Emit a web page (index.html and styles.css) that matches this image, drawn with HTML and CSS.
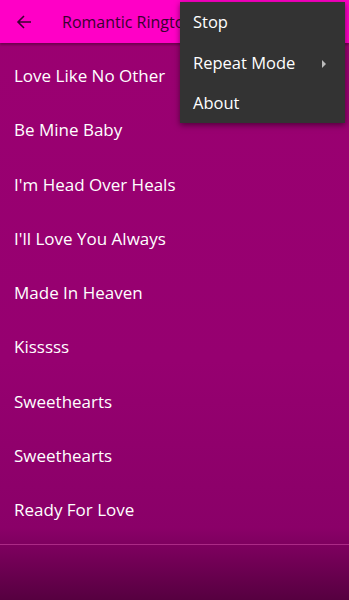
FILE: index.html
```html
<!DOCTYPE html>
<html lang="en">
<head>
  <meta charset="UTF-8">
  <meta name="viewport" content="width=device-width, initial-scale=1.0">
  <title>Romantic Ringtones</title>
  <link rel="stylesheet" href="styles.css">
</head>
<body>
  <div class="app">
    <div class="toolbar">
      <svg class="back" width="16" height="16" viewBox="0 0 16 16">
        <path d="M15 8H2M8 2L2 8l6 6" fill="none" stroke="#3a0030" stroke-width="1.6"/>
      </svg>
      <span class="title">Romantic Ringtones</span>
    </div>

    <div class="list">
      <div class="item">Love Like No Other</div>
      <div class="item">Be Mine Baby</div>
      <div class="item">I'm Head Over Heals</div>
      <div class="item">I'll Love You Always</div>
      <div class="item">Made In Heaven</div>
      <div class="item">Kisssss</div>
      <div class="item">Sweethearts</div>
      <div class="item">Sweethearts</div>
      <div class="item">Ready For Love</div>
    </div>
    <div class="footer"></div>

    <div class="menu">
      <div class="menu-item">Stop</div>
      <div class="menu-item">Repeat Mode <span class="arrow"></span></div>
      <div class="menu-item">About</div>
    </div>
  </div>
</body>
</html>
```

FILE: styles.css
```css
body {
  margin: 0;
  padding: 0;
  font-family: 'Open Sans', 'Noto Sans', sans-serif;
  background: #990070;
  overflow: hidden;
}

.app {
  position: relative;
  width: 349px;
  height: 600px;
  background: linear-gradient(to bottom, #9b0071 0%, #960070 60%, #8a0068 88%, #560040 100%);
}

.toolbar {
  height: 43px;
  background: #ff00c6;
  display: flex;
  align-items: center;
  box-shadow: 0 2px 2px rgba(60, 0, 40, 0.45);
  overflow: hidden;
  white-space: nowrap;
}

.back {
  margin-left: 16px;
  flex-shrink: 0;
}

.title {
  margin-left: 30px;
  width: 118px;
  overflow: hidden;
  font-size: 16px;
  color: #3a0030;
}

.list {
  padding-top: 2px;
}

.item {
  height: 54.3px;
  line-height: 61px;
  padding-left: 14px;
  font-size: 17px;
  color: #fff;
}

.footer {
  margin-top: 10px;
  border-top: 1px solid rgba(255, 120, 210, 0.35);
}

.menu {
  position: absolute;
  top: 2px;
  left: 180px;
  width: 165px;
  height: 121px;
  background: #333333;
  box-shadow: 0 2px 6px rgba(0, 0, 0, 0.5);
}

.menu-item {
  height: 40.5px;
  line-height: 40px;
  padding-left: 13px;
  font-size: 16.5px;
  color: #fff;
  position: relative;
}

.arrow {
  position: absolute;
  right: 19px;
  top: 17px;
  width: 0;
  height: 0;
  border-top: 4px solid transparent;
  border-bottom: 4px solid transparent;
  border-left: 4px solid #bbbbbb;
}
```
